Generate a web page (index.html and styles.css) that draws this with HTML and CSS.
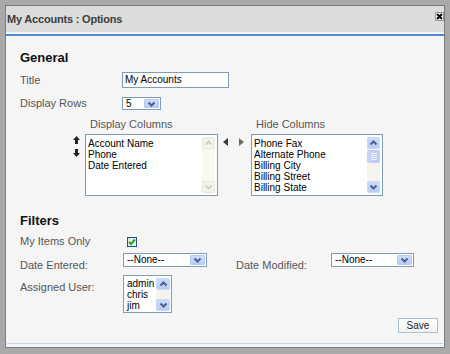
FILE: index.html
```html
<!DOCTYPE html>
<html>
<head>
<meta charset="utf-8">
<link rel="stylesheet" href="styles.css">
</head>
<body>
<div class="window">
  <div class="titlebar">
    <span class="title">My Accounts : Options</span>
    <svg class="close" width="9" height="9" viewBox="0 0 9 9"><rect x="0.5" y="0.5" width="8" height="8" fill="#fff" stroke="#9a9a9a"/><path d="M2 2 L7 7 M7 2 L2 7" stroke="#000" stroke-width="2"/></svg>
  </div>
  <div class="title-rule"></div>
  <div class="content">
    <h2 class="section">General</h2>
    <div class="row row-title">
      <span class="label">Title</span>
      <div class="textbox">My Accounts</div>
    </div>
    <div class="row row-rows">
      <span class="label">Display Rows</span>
      <div class="select sel-rows"><span class="sel-text">5</span><span class="sel-btn"><svg width="9" height="6" viewBox="0 0 9 6"><path d="M1.5 1.5 L4.5 4.5 L7.5 1.5" fill="none" stroke="#4d6185" stroke-width="2"/></svg></span></div>
    </div>
    <div class="columns">
      <div class="updown">
        <svg width="7" height="8" viewBox="0 0 7 8"><polygon points="3.5,0 7,4 5,4 5,8 2,8 2,4 0,4" fill="#222"/></svg>
        <svg width="7" height="8" viewBox="0 0 7 8"><polygon points="3.5,8 7,4 5,4 5,0 2,0 2,4 0,4" fill="#222"/></svg>
      </div>
      <div class="colgroup col-display">
        <div class="collabel">Display Columns</div>
        <div class="listbox lb-display">
          <div class="items">
            <div>Account Name</div>
            <div>Phone</div>
            <div>Date Entered</div>
          </div>
          <div class="scroll disabled">
            <span class="sb-btn"><svg width="9" height="6" viewBox="0 0 9 6"><path d="M1.5 4.5 L4.5 1.5 L7.5 4.5" fill="none" stroke="#c9c8bd" stroke-width="1.6"/></svg></span>
            <span class="sb-track"></span>
            <span class="sb-btn"><svg width="9" height="6" viewBox="0 0 9 6"><path d="M1.5 1.5 L4.5 4.5 L7.5 1.5" fill="none" stroke="#c9c8bd" stroke-width="1.6"/></svg></span>
          </div>
        </div>
      </div>
      <div class="leftright">
        <svg width="5" height="8" viewBox="0 0 5 8"><polygon points="5,0 5,8 0,4" fill="#3a3a3a"/></svg>
        <svg width="5" height="8" viewBox="0 0 5 8"><polygon points="0,0 5,4 0,8" fill="#6c6c5e"/></svg>
      </div>
      <div class="colgroup col-hide">
        <div class="collabel">Hide Columns</div>
        <div class="listbox lb-hide">
          <div class="items">
            <div>Phone Fax</div>
            <div>Alternate Phone</div>
            <div>Billing City</div>
            <div>Billing Street</div>
            <div>Billing State</div>
          </div>
          <div class="scroll">
            <span class="sb-btn"><svg width="9" height="6" viewBox="0 0 9 6"><path d="M1.5 4.5 L4.5 1.5 L7.5 4.5" fill="none" stroke="#4d6185" stroke-width="2"/></svg></span>
            <span class="sb-thumb"><i></i><i></i><i></i><i></i></span>
            <span class="sb-track"></span>
            <span class="sb-btn"><svg width="9" height="6" viewBox="0 0 9 6"><path d="M1.5 1.5 L4.5 4.5 L7.5 1.5" fill="none" stroke="#4d6185" stroke-width="2"/></svg></span>
          </div>
        </div>
      </div>
    </div>

    <h2 class="section filters">Filters</h2>
    <div class="row row-mine">
      <span class="label flabel">My Items Only</span>
      <span class="checkbox"><svg width="8" height="8" viewBox="0 0 8 8"><path d="M1 4 L3 6 L7 1.5" fill="none" stroke="#21a321" stroke-width="2"/></svg></span>
    </div>
    <div class="row row-dates">
      <span class="label flabel low">Date Entered:</span>
      <div class="select sel-date"><span class="sel-text">--None--</span><span class="sel-btn"><svg width="9" height="6" viewBox="0 0 9 6"><path d="M1.5 1.5 L4.5 4.5 L7.5 1.5" fill="none" stroke="#4d6185" stroke-width="2"/></svg></span></div>
      <span class="label mlabel low">Date Modified:</span>
      <div class="select sel-date2"><span class="sel-text">--None--</span><span class="sel-btn"><svg width="9" height="6" viewBox="0 0 9 6"><path d="M1.5 1.5 L4.5 4.5 L7.5 1.5" fill="none" stroke="#4d6185" stroke-width="2"/></svg></span></div>
    </div>
    <div class="row row-user">
      <span class="label flabel low">Assigned User:</span>
      <div class="listbox lb-user">
        <div class="items">
          <div>admin</div>
          <div>chris</div>
          <div>jim</div>
        </div>
        <div class="scroll">
          <span class="sb-btn"><svg width="9" height="6" viewBox="0 0 9 6"><path d="M1.5 4.5 L4.5 1.5 L7.5 4.5" fill="none" stroke="#4d6185" stroke-width="2"/></svg></span>
          <span class="sb-track"></span>
          <span class="sb-btn"><svg width="9" height="6" viewBox="0 0 9 6"><path d="M1.5 1.5 L4.5 4.5 L7.5 1.5" fill="none" stroke="#4d6185" stroke-width="2"/></svg></span>
        </div>
      </div>
    </div>
    <div class="actions">
      <span class="button">Save</span>
    </div>
  </div>
  <div class="bottom-rule"></div>
</div>
</body>
</html>
```
FILE: styles.css
```css
* { box-sizing: border-box; }

html, body {
  margin: 0;
  width: 450px;
  height: 354px;
  overflow: hidden;
}

body {
  background: #a9a9a9;
  padding: 5px 5px 6px 5px;
  font-family: "Liberation Sans", Arial, sans-serif;
  color: #000;
}

.window {
  width: 440px;
  height: 343px;
  border: 1px solid #7c7c7c;
  background: #f5f5f5;
  display: flex;
  flex-direction: column;
}

.titlebar {
  height: 26px;
  background: #dcdcdc;
  display: flex;
  align-items: center;
  justify-content: space-between;
  padding-left: 1px;
}

.title {
  font-size: 11px;
  font-weight: bold;
  color: #3c3c3c;
  letter-spacing: -0.2px;
}

.close {
  align-self: flex-start;
  margin-top: 6px;
  display: block;
}

.title-rule {
  margin-top: 2px;
  height: 2px;
  background: #4b8ad6;
}

.content {
  flex: 1;
  display: flex;
  flex-direction: column;
  padding: 14px 6px 0 14px;
}

.section {
  margin: 0;
  font-size: 13px;
  line-height: 15px;
  font-weight: bold;
  color: #111;
}

.row {
  display: flex;
  align-items: center;
}

.label {
  font-size: 11px;
  line-height: 13px;
  color: #555;
  flex: none;
}

.row-title .label,
.row-rows .label { width: 102px; }

.row-title { margin-top: 7px; height: 16px; }
.row-rows { margin-top: 9px; height: 13px; }

.textbox {
  width: 107px;
  height: 16px;
  border: 1px solid #7f9db9;
  background: #fff;
  font-size: 10px;
  line-height: 14px;
  padding-left: 2px;
}

.select {
  display: flex;
  align-items: stretch;
  border: 1px solid #7f9db9;
  background: #fff;
  padding: 1px;
}

.sel-text {
  flex: 1;
  font-size: 10px;
  line-height: 10px;
  padding-left: 2px;
  overflow: hidden;
}

.sel-btn {
  width: 15px;
  background: linear-gradient(#cfdcfd, #b6cbfa);
  border: 1px solid #b7c9f3;
  border-radius: 1px;
  display: flex;
  align-items: center;
  justify-content: center;
}

.sel-rows { width: 39px; height: 13px; }

/* columns */
.columns {
  display: flex;
  margin-top: 8px;
  padding-left: 53px;
}

.updown {
  width: 12px;
  padding-top: 18px;
  display: flex;
  flex-direction: column;
  gap: 5px;
}
.updown svg { display: block; }

.collabel {
  font-size: 11px;
  line-height: 13px;
  color: #555;
  padding-left: 5px;
}

.listbox {
  margin-top: 3px;
  border: 1px solid #7f9db9;
  background: #fff;
  display: flex;
  padding: 2px;
}

.lb-display { width: 133px; height: 62px; }
.lb-hide { width: 132px; height: 62px; }

.items {
  flex: 1;
  overflow: hidden;
  font-size: 10px;
  line-height: 11px;
  padding-top: 1px;
}

.leftright {
  width: 33px;
  padding: 20px 0 0 5px;
  display: flex;
  gap: 11px;
  align-items: flex-start;
}
.leftright svg { display: block; }

.scroll {
  width: 13px;
  display: flex;
  flex-direction: column;
  background: #f4f3ec;
}

.sb-btn {
  height: 12px;
  flex: none;
  background: linear-gradient(#cbdafd, #b8ccf9);
  border: 1px solid #c9d8fb;
  border-radius: 2px;
  display: flex;
  align-items: center;
  justify-content: center;
}

.sb-track { flex: 1; }

.sb-thumb {
  height: 13px;
  margin-top: 1px;
  flex: none;
  background: linear-gradient(90deg, #c6d6fc, #b4c8f8);
  border: 1px solid #c1d3fb;
  border-radius: 2px;
  display: flex;
  flex-direction: column;
  align-items: center;
  justify-content: center;
  gap: 1px;
}
.sb-thumb i {
  display: block;
  width: 6px;
  height: 1px;
  background: #eef3fe;
}

.scroll.disabled { background: #f9f8f3; }
.scroll.disabled .sb-btn {
  background: #f3f2ec;
  border-color: #e9e8e0;
}

/* filters */
.filters { margin-top: 17px; }

.flabel { width: 103px; }
.low { align-self: flex-start; }

.row-mine { margin-top: 7px; height: 13px; }

.checkbox {
  margin-left: 4px;
  width: 10px;
  height: 10px;
  border: 1px solid #1c5180;
  background: linear-gradient(135deg, #e0e0da, #fff);
  display: flex;
  align-items: center;
  justify-content: center;
}

.row-dates {
  margin-top: 5px;
  align-items: flex-start;
}
.row-dates .low { margin-top: 6px; }

.sel-date { width: 84px; height: 14px; }
.sel-date2 { width: 83px; height: 14px; }
.mlabel { width: 95px; margin-left: 29px; }

.row-user {
  margin-top: 3px;
  align-items: flex-start;
}
.row-user .low { margin-top: 6px; }

.lb-user {
  margin-top: 0;
  width: 49px;
  height: 38px;
  padding: 2px 1px 1px 2px;
}
.lb-user .items { padding-left: 1px; padding-top: 0; }
.lb-user .scroll { width: 14px; }

.actions {
  display: flex;
  justify-content: flex-end;
  margin-top: 5px;
}

.button {
  width: 40px;
  height: 15px;
  border: 1px solid #a9bfd6;
  background: linear-gradient(#ffffff, #f1f1ee);
  font-size: 10px;
  line-height: 13px;
  text-align: center;
  color: #222;
}

.bottom-rule {
  height: 1px;
  background: #bfd3ec;
  margin: 0 1px 3px 1px;
}
```
